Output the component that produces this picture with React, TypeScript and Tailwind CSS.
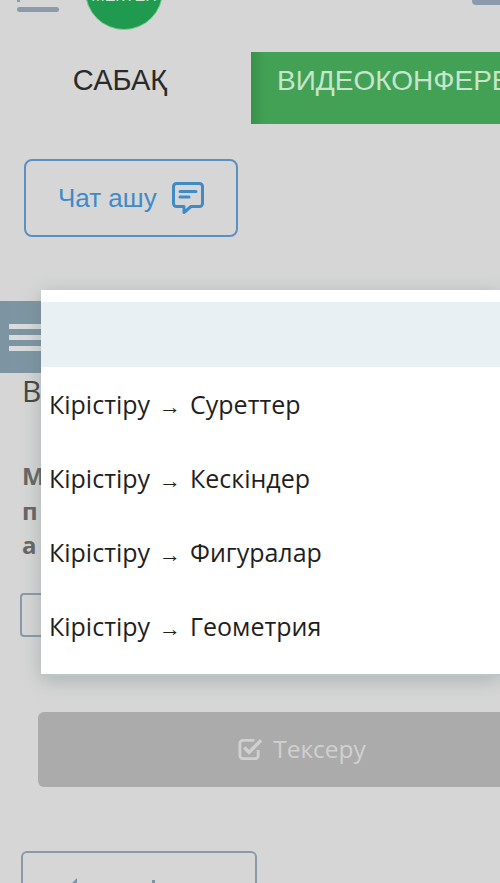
import React from 'react';

const options = ['Суреттер', 'Кескіндер', 'Фигуралар', 'Геометрия'];

export default function App() {
  return (
    <div className="relative w-[500px] h-[883px] overflow-hidden bg-[#d6d6d6] font-['Liberation_Sans',sans-serif]">
      {/* Header, scrolled partly off the top */}
      <div className="h-[30px] flex items-end relative">
        <div className="absolute left-[17px] top-0 w-[3px] h-[2px] bg-[#8b9bab]" />
        <div className="ml-[17px] mb-[18px] w-[42px] h-[5px] rounded-sm bg-[#8b9bab]" />
        <div className="ml-[26px] w-[78px] h-[78px] shrink-0 rounded-full bg-[#1f9a4e] border border-[#7fc792] flex items-end justify-center pb-[25px]">
          <span className="text-[16px] leading-none text-[#cfe8d6]">МЕКТЕП</span>
        </div>
        <div className="ml-auto self-start w-[28px] h-[5px] rounded-bl-sm bg-[#8a9bae]" />
      </div>

      {/* Tabs */}
      <div className="mt-[22px] flex h-[72px]">
        <div className="w-[251px] shrink-0 flex items-center justify-center pr-[11px] pb-[14px] text-[29px] text-[#2a2a2a]">САБАҚ</div>
        <div className="flex-1 min-w-0 overflow-hidden bg-gradient-to-r from-[#37924a] to-[#43a156] to-[6%] flex items-center pl-[26px] pb-[14px] text-[28px] whitespace-nowrap text-[#c6e6cb]">ВИДЕОКОНФЕРЕНЦИЯ</div>
      </div>

      {/* Chat */}
      <div className="mt-[35px] ml-[24px] w-[214px] h-[78px] rounded-lg border-2 border-[#5b90c0] flex items-center pl-[32px] gap-[15px]">
        <span className="text-[26px] text-[#3f8bc9]">Чат ашу</span>
        <svg width="32" height="32" viewBox="0 0 32 32" fill="none" stroke="#3f8bc9" strokeWidth="3" strokeLinecap="round" strokeLinejoin="round">
          <path d="M4.500 1.500h23a3 3 0 0 1 3 3v17a3 3 0 0 1-3 3H19l-7 6v-6H4.500a3 3 0 0 1-3-3v-17a3 3 0 0 1 3-3z" />
          <path d="M8 9.500h16M8 15h9" />
        </svg>
      </div>

      {/* Task behind the modal */}
      <div className="mt-[64px] h-[72px] bg-gradient-to-r from-[#7d95a2] to-[#8fa3ae] flex flex-col justify-center gap-[6px] pl-[9px]">
        <div className="w-[40px] h-[5px] bg-[#d8dcdc]" />
        <div className="w-[40px] h-[5px] bg-[#d8dcdc]" />
        <div className="w-[40px] h-[5px] bg-[#d8dcdc]" />
      </div>
      <div className="mt-[1px] ml-[22px] text-[30px] leading-[34px] text-[#444] font-['Open_Sans',sans-serif]">В</div>
      <div className="mt-[51px] ml-[22px] text-[24px] leading-[34.500px] font-bold text-[#666] font-['Open_Sans',sans-serif]">
        <div>М</div>
        <div>п</div>
        <div>а</div>
      </div>
      <div className="mt-[30px] ml-[20px] w-[60px] h-[44px] rounded border-2 border-[#8a9aa8]" />

      {/* Check button */}
      <div className="mt-[75px] ml-[38px] w-[528px] h-[75px] rounded-md bg-[#ababab] flex items-center justify-center gap-[10px] text-[24.500px] text-[#d0d0d0] font-['Open_Sans',sans-serif]">
        <svg width="25" height="24" viewBox="0 0 26 24" fill="none" stroke="#d0d0d0" strokeWidth="3">
          <path d="M21 13v6a3 3 0 0 1-3 3H5a3 3 0 0 1-3-3V6a3 3 0 0 1 3-3h12" />
          <path d="M6.500 10.500l5 5L24 3" strokeWidth="3.600" />
        </svg>
        <span>Тексеру</span>
      </div>

      {/* Back button, cut off by the bottom edge */}
      <div className="mt-[64px] ml-[21px] w-[236px] h-[60px] rounded-md border-2 border-[#8a99a8] flex items-start pt-[24px] pl-[42px]">
        <svg width="20" height="20" viewBox="0 0 20 20" fill="#7f93a3">
          <path d="M12 1L3 10l9 9z" />
        </svg>
        <div className="ml-[67px] mt-[3px] w-[3px] h-[6px] bg-[#7f93a3]" />
      </div>

      {/* Modal */}
      <div className="absolute left-[41px] top-[290px] w-[459px] h-[386px] bg-white pt-[12px] shadow-[0_4px_18px_rgba(90,110,110,0.35)] border-b-2 border-[#b7c9c7] font-['Open_Sans',sans-serif]">
        <div className="h-[65px] bg-[#e8f0f3]" />
        <div className="pt-[1px]">
          {options.map((o) => (
            <div key={o} className="h-[74px] flex items-center pl-[8px] text-[25px] text-[#1f1f1f] whitespace-pre">
              <span>Кірістіру</span>
              <span className="w-[40px] text-center mt-[3px] font-['Liberation_Sans',sans-serif] text-[22px]">→</span>
              <span>{o}</span>
            </div>
          ))}
        </div>
      </div>
    </div>
  );
}
